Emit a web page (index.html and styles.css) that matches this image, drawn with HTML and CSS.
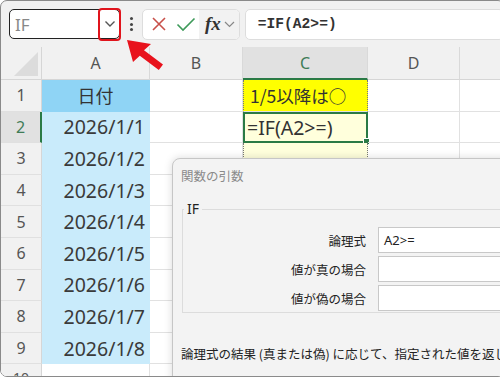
FILE: index.html
```html
<!DOCTYPE html>
<html lang="ja">
<head>
    <meta charset="UTF-8">
    <title>IF関数</title>
    <link rel="stylesheet" href="styles.css">
</head>
<body>
<div class="frame">
    <div class="toolbar">
        <div class="namebox">
            <span class="name">IF</span>
            <span class="drop">
                <svg width="12" height="8" viewBox="0 0 12 8"><path d="M1.5 1.5 L6 6 L10.5 1.5" fill="none" stroke="#555" stroke-width="1.4"/></svg>
            </span>
        </div>
        <div class="dots"><i></i><i></i><i></i></div>
        <div class="fbuttons">
            <span class="fbtn">
                <svg width="16" height="16" viewBox="0 0 16 16"><path d="M2 2 L14 14 M14 2 L2 14" stroke="#c8504a" stroke-width="1.6"/></svg>
            </span>
            <span class="fbtn">
                <svg width="20" height="16" viewBox="0 0 20 16"><path d="M1.5 8.5 L7 14 L18.5 2.5" fill="none" stroke="#3e9a5a" stroke-width="1.6"/></svg>
            </span>
            <span class="fx">
                <span class="fxtext">fx</span>
                <svg width="11" height="7" viewBox="0 0 11 7"><path d="M1 1 L5.5 5.5 L10 1" fill="none" stroke="#888" stroke-width="1.2"/></svg>
            </span>
        </div>
        <div class="formula">=IF(A2&gt;=)</div>
    </div>

    <div class="sheet">
        <div class="corner"><span class="tri"></span></div>
        <div class="colhead">A</div>
        <div class="colhead">B</div>
        <div class="colhead selcol">C</div>
        <div class="colhead">D</div>
        <div class="colhead last"></div>

        <div class="rowhead">1</div>
        <div class="cell blue-head">日付</div>
        <div class="cell"></div>
        <div class="cell yellow">1/5以降は○</div>
        <div class="cell"></div>
        <div class="cell"></div>

        <div class="rowhead selrow">2</div>
        <div class="cell blue date">2026/1/1</div>
        <div class="cell"></div>
        <div class="cell active">=IF(A2&gt;=)<span class="handle"></span></div>
        <div class="cell"></div>
        <div class="cell"></div>

        <div class="rowhead">3</div>
        <div class="cell blue date">2026/1/2</div>
        <div class="cell"></div>
        <div class="cell pale"></div>
        <div class="cell"></div>
        <div class="cell"></div>

        <div class="rowhead">4</div>
        <div class="cell blue date">2026/1/3</div>
        <div class="cell"></div>
        <div class="cell pale"></div>
        <div class="cell"></div>
        <div class="cell"></div>

        <div class="rowhead">5</div>
        <div class="cell blue date">2026/1/4</div>
        <div class="cell"></div>
        <div class="cell pale"></div>
        <div class="cell"></div>
        <div class="cell"></div>

        <div class="rowhead">6</div>
        <div class="cell blue date">2026/1/5</div>
        <div class="cell"></div>
        <div class="cell pale"></div>
        <div class="cell"></div>
        <div class="cell"></div>

        <div class="rowhead">7</div>
        <div class="cell blue date">2026/1/6</div>
        <div class="cell"></div>
        <div class="cell pale"></div>
        <div class="cell"></div>
        <div class="cell"></div>

        <div class="rowhead">8</div>
        <div class="cell blue date">2026/1/7</div>
        <div class="cell"></div>
        <div class="cell pale"></div>
        <div class="cell"></div>
        <div class="cell"></div>

        <div class="rowhead">9</div>
        <div class="cell blue date">2026/1/8</div>
        <div class="cell"></div>
        <div class="cell pale"></div>
        <div class="cell"></div>
        <div class="cell"></div>

        <div class="rowhead short">10</div>
        <div class="cell"></div>
        <div class="cell"></div>
        <div class="cell pale"></div>
        <div class="cell"></div>
        <div class="cell"></div>
    </div>

    <div class="dialog">
        <div class="dlg-title">関数の引数</div>
        <fieldset class="group">
            <legend>IF</legend>
            <div class="arg">
                <label>論理式</label>
                <div class="field">A2&gt;=</div>
            </div>
            <div class="arg">
                <label>値が真の場合</label>
                <div class="field"></div>
            </div>
            <div class="arg">
                <label>値が偽の場合</label>
                <div class="field"></div>
            </div>
        </fieldset>
        <p class="desc">論理式の結果 (真または偽) に応じて、指定された値を返します。</p>
    </div>

    <svg class="arrow" width="60" height="50" viewBox="0 0 60 50">
        <polygon points="7,0 31,4 24,10.3 43,24.5 38.8,30 19.8,15.8 13,22" fill="#e8121c"/>
    </svg>
</div>
</body>
</html>
```

FILE: styles.css
```css
body {
    margin: 0;
    font-family: "Noto Sans", "Noto Sans CJK JP", sans-serif;
    color: #333;
}
.frame {
    position: relative;
    width: 503px;
    height: 375px;
    border: 1.5px solid #8a8a8a;
    border-radius: 7px;
    background: #f1f1f1;
    overflow: hidden;
}

/* toolbar */
.toolbar {
    display: flex;
    align-items: center;
    height: 46px;
    padding-left: 8px;
}
.namebox {
    display: flex;
    align-items: center;
    width: 109px;
    height: 28px;
    border: 1.5px solid #222;
    border-radius: 5px;
    background: #fff;
    position: relative;
}
.name {
    flex: 1;
    padding-left: 5px;
    font-size: 17px;
    color: #888;
}
.drop {
    display: flex;
    align-items: center;
    justify-content: center;
    width: 19px;
    height: 29px;
    margin-right: -2px;
    border: 2px solid #e0141c;
    border-radius: 4px;
}
.dots {
    display: flex;
    flex-direction: column;
    gap: 2.5px;
    margin: 0 9px 0 10px;
}
.dots i {
    width: 3px;
    height: 3px;
    border-radius: 50%;
    background: #444;
}
.fbuttons {
    display: flex;
    align-items: center;
    height: 29px;
    border: 1px solid #ddd;
    border-radius: 5px;
    background: #fff;
    overflow: hidden;
}
.fbtn {
    display: flex;
    align-items: center;
    justify-content: center;
    width: 27px;
    height: 29px;
}
.fbtn:first-child {
    width: 26px;
    margin-left: 3px;
}
.fx {
    display: flex;
    align-items: center;
    gap: 3px;
    height: 29px;
    padding: 0 4px 0 6px;
    background: #f2f2f2;
}
.fxtext {
    font-family: "Liberation Serif", serif;
    font-style: italic;
    font-weight: bold;
    font-size: 19px;
    color: #333;
}
.formula {
    flex: 1;
    display: flex;
    align-items: center;
    height: 29px;
    margin-left: 5px;
    padding-left: 12px;
    border: 1px solid #ddd;
    border-radius: 5px;
    background: #fff;
    font-family: "Liberation Mono", monospace;
    font-weight: bold;
    font-size: 14.6px;
    color: #333;
}

/* sheet */
.sheet {
    display: grid;
    grid-template-columns: 41px 108px 93px 125px 92px 1fr;
    grid-template-rows: 33px repeat(9, 31.6px) 30px;
    background: #fff;
}
.corner {
    background: #f1f1f1;
    border-right: 1px solid #d6d6d6;
    border-bottom: 1px solid #d6d6d6;
    display: flex;
    align-items: flex-end;
    justify-content: flex-end;
}
.tri {
    width: 0;
    height: 0;
    margin: 0 3px 3px 0;
    border-left: 24px solid transparent;
    border-bottom: 24px solid #dcdcdc;
}
.colhead {
    display: flex;
    align-items: center;
    justify-content: center;
    background: #f1f1f1;
    border-right: 1px solid #d9d9d9;
    border-bottom: 1px solid #d6d6d6;
    font-size: 16px;
    color: #555;
}
.colhead.selcol {
    background: #e1e1e1;
    color: #3f7c57;
    border-bottom: 2px solid #2a7a45;
}
.rowhead {
    display: flex;
    align-items: center;
    justify-content: center;
    background: #f1f1f1;
    border-right: 1px solid #d6d6d6;
    border-bottom: 1px solid #e0e0e0;
    font-size: 16px;
    color: #555;
}
.rowhead.short {
    align-items: flex-start;
    font-size: 14px;
    padding-top: 4px;
}
.rowhead.selrow {
    background: #e1e1e1;
    color: #3f7c57;
    border-right: 2px solid #2a7a45;
}
.cell {
    display: flex;
    align-items: center;
    border-right: 1px solid #e1e1e1;
    border-bottom: 1px solid #e1e1e1;
    font-family: "Noto Sans CJK JP", sans-serif;
    color: #333;
    position: relative;
}
.blue-head {
    justify-content: center;
    background: #8fd4f5;
    border-color: #8fd4f5;
    font-size: 18px;
}
.blue {
    background: #c9ebfb;
    border-color: #c9ebfb;
}
.date {
    justify-content: flex-end;
    padding-right: 4px;
    font-family: "Noto Sans", sans-serif;
    font-size: 19.5px;
    color: #3a3a3a;
}
.yellow {
    padding-left: 6px;
    background: #ffff00;
    border-left: 1px dotted #777;
    border-right: 1px dotted #777;
    font-size: 17.5px;
}
.active {
    background: #ffffdc;
    border: 2px solid #2a7a45;
    padding-left: 2px;
    font-family: "Noto Sans", sans-serif;
    font-size: 19.5px;
}
.handle {
    position: absolute;
    right: -4px;
    bottom: -4px;
    width: 5px;
    height: 5px;
    background: #2a7a45;
    border: 1px solid #fff;
}
.pale {
    background: #ffffdc;
    border-left: 1px dotted #777;
    border-right: 1px dotted #777;
}

/* function arguments dialog */
.dialog {
    position: absolute;
    left: 171px;
    top: 157px;
    width: 360px;
    height: 240px;
    background: #f3f3f3;
    border: 1px solid #c6c6c6;
    border-radius: 8px;
    box-shadow: 0 0 8px rgba(0, 0, 0, 0.15);
}
.dlg-title {
    margin: 7px 0 0 8px;
    font-family: "Noto Sans CJK JP", sans-serif;
    font-size: 12.5px;
    color: #8a8a8a;
}
.group {
    margin: 18px 0 0 9px;
    padding: 12px 0 0 0;
    height: 96px;
    border: 1px solid #dcdcdc;
    border-right: none;
}
.group legend {
    margin-left: 1px;
    padding: 0 3px;
    font-family: "Noto Sans", sans-serif;
    font-size: 14px;
    color: #222;
    line-height: 12px;
}
.arg {
    display: flex;
    align-items: center;
    gap: 12px;
    margin-bottom: 3px;
}
.arg label {
    width: 183px;
    text-align: right;
    font-family: "Noto Sans CJK JP", sans-serif;
    font-size: 12.5px;
    color: #222;
}
.field {
    flex: 1;
    height: 24px;
    display: flex;
    align-items: center;
    padding-left: 5px;
    background: #fff;
    border: 1px solid #c8c8c8;
    font-family: "Noto Sans", sans-serif;
    font-size: 13px;
    color: #222;
}
.desc {
    margin: 31px 0 0 8px;
    font-family: "Noto Sans CJK JP", sans-serif;
    font-size: 12.5px;
    color: #222;
    white-space: nowrap;
}

.arrow {
    position: absolute;
    left: 119px;
    top: 39px;
}
```
